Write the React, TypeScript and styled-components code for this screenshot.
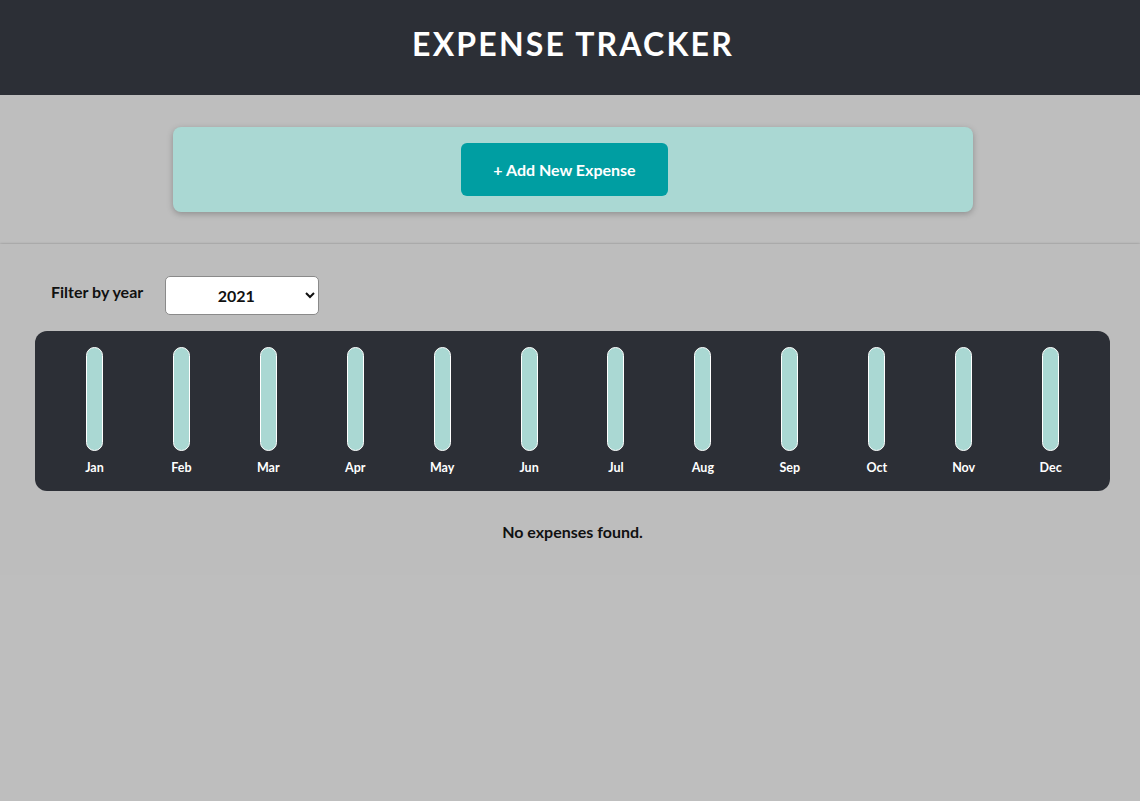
import React from "react";
import styled, { createGlobalStyle } from "styled-components";

const Global = createGlobalStyle`
  * { box-sizing: border-box; }
  html, body { margin: 0; padding: 0; background: #bebebe; }
  body { font-family: Lato, "Noto Sans", sans-serif; }
`;

const Header = styled.header`
  height: 95px;
  background: #2c2f36;
  display: flex;
  align-items: center;
  justify-content: center;
`;

const Title = styled.h1`
  margin: 0 0 0 6px;
  color: #ffffff;
  font-size: 32px;
  font-weight: 700;
  letter-spacing: 2.2px;
  padding-bottom: 8px;
`;

const Main = styled.main`
  padding-top: 32px;
`;

const NewExpenseCard = styled.div`
  width: 800px;
  height: 85px;
  margin: 0 auto;
  position: relative;
  left: 3px;
  background: #aad8d3;
  border-radius: 8px;
  box-shadow: 0 2px 6px rgba(0, 0, 0, 0.25);
  display: flex;
  align-items: center;
  justify-content: center;
`;

const AddButton = styled.button`
  width: 207px;
  height: 53px;
  border: none;
  border-radius: 6px;
  background: #009ea2;
  color: #ffffff;
  font-family: inherit;
  font-size: 16px;
  font-weight: 700;
  cursor: pointer;
  margin-left: -17px;
`;

const ExpensesSection = styled.section`
  margin-top: 32px;
  height: 331px;
  background: #bdbdbd;
  padding: 32px 30px 0 35px;
  box-shadow: 0 0 2px rgba(0, 0, 0, 0.2), 0 2px 4px rgba(0, 0, 0, 0.35);
`;

const FilterRow = styled.div`
  display: flex;
  align-items: center;
  gap: 22px;
  padding-left: 16px;
  margin-bottom: 16px;
`;

const FilterLabel = styled.label`
  font-size: 16px;
  font-weight: 700;
  color: #111;
  margin-top: -8px;
`;

const YearSelect = styled.select`
  width: 154px;
  height: 39px;
  border: 1px solid #8a8a8a;
  border-radius: 5px;
  background: #ffffff;
  font-family: inherit;
  font-size: 16px;
  font-weight: 700;
  text-align: center;
  text-align-last: center;
  color: #111;
`;

const Chart = styled.div`
  height: 160px;
  background: #2c2f36;
  border-radius: 12px;
  padding: 16px 16px;
  display: flex;
`;

const Column = styled.div`
  flex: 1;
  display: flex;
  flex-direction: column;
  align-items: center;
`;

const Bar = styled.div`
  width: 17px;
  height: 105px;
  border: 1px solid #ffffff;
  border-radius: 10px;
  background: #aad8d3;
`;

const MonthLabel = styled.div`
  margin-top: 9px;
  color: #ffffff;
  font-size: 12.5px;
  font-weight: 700;
`;

const Empty = styled.p`
  margin: 31px 0 0;
  text-align: center;
  font-size: 16px;
  font-weight: 700;
  color: #111;
`;

const months = ["Jan", "Feb", "Mar", "Apr", "May", "Jun", "Jul", "Aug", "Sep", "Oct", "Nov", "Dec"];

export default function App() {
  return (
    <>
      <Global />
      <Header>
        <Title>EXPENSE TRACKER</Title>
      </Header>
      <Main>
        <NewExpenseCard>
          <AddButton>+ Add New Expense</AddButton>
        </NewExpenseCard>
        <ExpensesSection>
          <FilterRow>
            <FilterLabel>Filter by year</FilterLabel>
            <YearSelect defaultValue="2021">
              <option value="2022">2022</option>
              <option value="2021">2021</option>
              <option value="2020">2020</option>
              <option value="2019">2019</option>
            </YearSelect>
          </FilterRow>
          <Chart>
            {months.map((m) => (
              <Column key={m}>
                <Bar />
                <MonthLabel>{m}</MonthLabel>
              </Column>
            ))}
          </Chart>
          <Empty>No expenses found.</Empty>
        </ExpensesSection>
      </Main>
    </>
  );
}
